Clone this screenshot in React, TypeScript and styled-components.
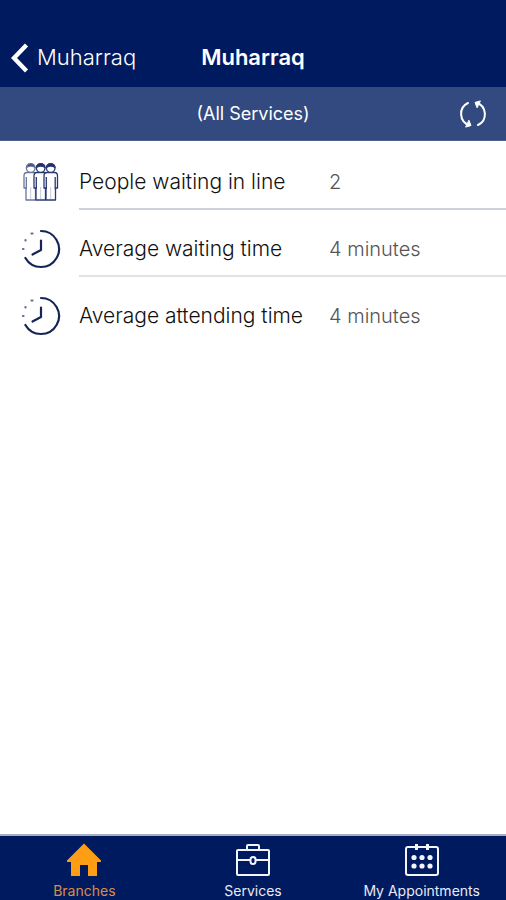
import React from "react";
import styled, { createGlobalStyle } from "styled-components";

const GlobalStyle = createGlobalStyle`
  * { box-sizing: border-box; }
  body { margin: 0; background: #ffffff; }
  button { font: inherit; color: inherit; background: none; border: 0; padding: 0; cursor: pointer; }
`;

const Screen = styled.div`
  display: flex;
  flex-direction: column;
  min-height: 100vh;
  font-family: Inter, "Liberation Sans", sans-serif;
  color: #111111;
`;

const Header = styled.header`
  display: grid;
  grid-template-columns: 1fr auto 1fr;
  align-items: center;
  padding: 40px 11px 12px;
  background: #001a60;
  color: #ffffff;
`;

const BackButton = styled.button`
  && {
    display: flex;
    align-items: center;
    justify-self: start;
    gap: 8px;
    font-size: 22px;
    font-weight: 300;
    line-height: 35px;
  }
`;

const Title = styled.h1`
  margin: 0;
  font-size: 22px;
  font-weight: 600;
  line-height: 35px;
`;

const FilterBar = styled.div`
  display: grid;
  grid-template-columns: 1fr auto 1fr;
  align-items: center;
  height: 54px;
  padding: 0 18px;
  background: #324a80;
  border-bottom: 1px solid #4d6190;
  color: #ffffff;
`;

const FilterLabel = styled.span`
  grid-column: 2;
  font-size: 18px;
  line-height: 24px;
`;

const RefreshButton = styled.button`
  display: flex;
  justify-self: end;
`;

const Stats = styled.dl`
  flex: 1;
  margin: 0;
  padding-top: 2px;
`;

const StatRow = styled.div`
  display: flex;
  align-items: stretch;
  padding-left: 21px;
`;

const StatIcon = styled.span`
  display: flex;
  flex: none;
  align-items: center;
  width: 58px;
  padding-top: 10px;
`;

const StatBody = styled.div<{ $line: string }>`
  display: grid;
  flex: 1;
  grid-template-columns: 250px 1fr;
  align-items: center;
  height: 67px;
  padding-top: 12px;
  border-bottom: 2px solid ${(p) => p.$line};
  font-size: 20px;
  font-weight: 300;
  line-height: 28px;
`;

const StatName = styled.dt`
  margin: 0;
  font-size: 21px;
`;

const StatValue = styled.dd`
  margin: 0;
  color: #555555;
`;

const TabBar = styled.nav`
  display: grid;
  grid-template-columns: repeat(3, 1fr);
  border-top: 2px solid #a9acc2;
  background: #001a60;
`;

const Tab = styled.a<{ $active?: boolean }>`
  display: flex;
  flex-direction: column;
  align-items: center;
  gap: 4px;
  padding-top: 6px;
  color: ${(p) => (p.$active ? "#ff9d14" : "#f4f5fb")};
  font-size: 14px;
  line-height: 18px;
  text-decoration: none;
  white-space: nowrap;
`;

const TabLabel = styled.span<{ $active?: boolean }>`
  color: ${(p) => (p.$active ? "#dc8c45" : "#e8eaf4")};
`;

const BackIcon = () => (
  <svg width="18" height="30" viewBox="0 0 18 30" fill="none" stroke="currentColor" strokeWidth="4.4" aria-hidden="true">
    <path d="M15.5 2 3 15l12.500 13" />
  </svg>
);

const RefreshIcon = () => (
  <svg width="30" height="30" viewBox="0 0 30 30" fill="none" stroke="currentColor" strokeWidth="2" strokeLinecap="round" strokeLinejoin="round" aria-hidden="true">
    <path d="M10 4A12 12 0 0 0 11.500 26.300" />
    <path d="m8 28 5-1.500-2-5Z" fill="currentColor" strokeWidth="1" />
    <path d="M20 26A12 12 0 0 0 18.500 3.700" />
    <path d="m22 2-5 1.500 2 5Z" fill="currentColor" strokeWidth="1" />
  </svg>
);

const Person = ({ x, dark }: { x: number; dark?: boolean }) => (
  <g transform={`translate(${x} 0)`} stroke={dark ? "#2a3873" : "#6b769c"} fill="#ffffff" strokeWidth="1.3" strokeLinejoin="round">
    <path d="M4 10.500H11.500Q14.500 10.500 14.500 14V26H12.500V38H3V26H1V14Q1 10.500 4 10.500Z" />
    <path d="M3.300 15V27M12.200 15V27" />
    <path d="M7.700 25V37" stroke="#c3c8da" strokeWidth="1" />
    <circle cx="7.700" cy="6" r="4.300" />
    <path d="M3.500 5.500A4.300 4.300 0 0 1 12 5.500Q7.700 2.500 3.500 5.500Z" fill="#172663" />
  </g>
);

const PeopleIcon = () => (
  <svg width="40" height="40" viewBox="0 0 40 40" aria-hidden="true">
    <Person x={2} />
    <Person x={12} dark />
    <Person x={22} dark />
  </svg>
);

const ClockIcon = () => (
  <svg width="40" height="40" viewBox="0 0 40 40" fill="none" stroke="#172458" strokeWidth="2.200" strokeLinecap="round" strokeLinejoin="round" aria-hidden="true">
    <path d="M20 2A18 18 0 1 1 4.400 29" />
    <path d="M20 11.500V21l-8.500 4.500" />
    <path d="M10.500 4.500h1M4.500 11v.5M2 20h.5" stroke="#66698a" />
  </svg>
);

const HomeIcon = () => (
  <svg width="36" height="36" viewBox="0 0 36 36" fill="currentColor" aria-hidden="true">
    <path d="M18 1.500 1 18.500V20h4v14h9V23h8v11h9V20h4v-1.500Z" />
  </svg>
);

const BriefcaseIcon = () => (
  <svg width="36" height="36" viewBox="0 0 36 36" fill="none" stroke="currentColor" strokeWidth="2" strokeLinejoin="round" aria-hidden="true">
    <rect x="2" y="8" width="32" height="25" rx="1" />
    <path d="M12 8V4q0-1 1-1h10q1 0 1 1v4" />
    <path d="M2 18h13M21 18h13" />
    <rect x="15.500" y="15" width="5" height="7" rx="2.500" />
  </svg>
);

const CalendarIcon = () => (
  <svg width="36" height="36" viewBox="0 0 36 36" fill="none" stroke="currentColor" strokeWidth="2" strokeLinejoin="round" aria-hidden="true">
    <rect x="2" y="5" width="32" height="28" rx="2" />
    <path d="M12.500 2v6M23.500 2v6" strokeWidth="3" />
    <g fill="currentColor" stroke="none">
      <circle cx="10" cy="15.500" r="2.600" />
      <circle cx="18" cy="15.500" r="2.600" />
      <circle cx="26" cy="15.500" r="2.600" />
      <circle cx="10" cy="24" r="2.600" />
      <circle cx="18" cy="24" r="2.600" />
      <circle cx="26" cy="24" r="2.600" />
    </g>
  </svg>
);

const stats = [
  { name: "People waiting in line", value: "2", line: "#cdd0de", Icon: PeopleIcon },
  { name: "Average waiting time", value: "4 minutes", line: "#e2e2e6", Icon: ClockIcon },
  { name: "Average attending time", value: "4 minutes", line: "transparent", Icon: ClockIcon },
];

const tabs = [
  { name: "Branches", href: "#branches", active: true, Icon: HomeIcon },
  { name: "Services", href: "#services", active: false, Icon: BriefcaseIcon },
  { name: "My Appointments", href: "#appointments", active: false, Icon: CalendarIcon },
];

export default function App() {
  return (
    <Screen>
      <GlobalStyle />
      <Header>
        <BackButton type="button">
          <BackIcon />
          Muharraq
        </BackButton>
        <Title>Muharraq</Title>
      </Header>
      <FilterBar>
        <FilterLabel>(All Services)</FilterLabel>
        <RefreshButton type="button" aria-label="Refresh">
          <RefreshIcon />
        </RefreshButton>
      </FilterBar>
      <Stats>
        {stats.map(({ name, value, line, Icon }) => (
          <StatRow key={name}>
            <StatIcon>
              <Icon />
            </StatIcon>
            <StatBody $line={line}>
              <StatName>{name}</StatName>
              <StatValue>{value}</StatValue>
            </StatBody>
          </StatRow>
        ))}
      </Stats>
      <TabBar>
        {tabs.map(({ name, href, active, Icon }) => (
          <Tab key={name} href={href} $active={active} aria-current={active ? "page" : undefined}>
            <Icon />
            <TabLabel $active={active}>{name}</TabLabel>
          </Tab>
        ))}
      </TabBar>
    </Screen>
  );
}
